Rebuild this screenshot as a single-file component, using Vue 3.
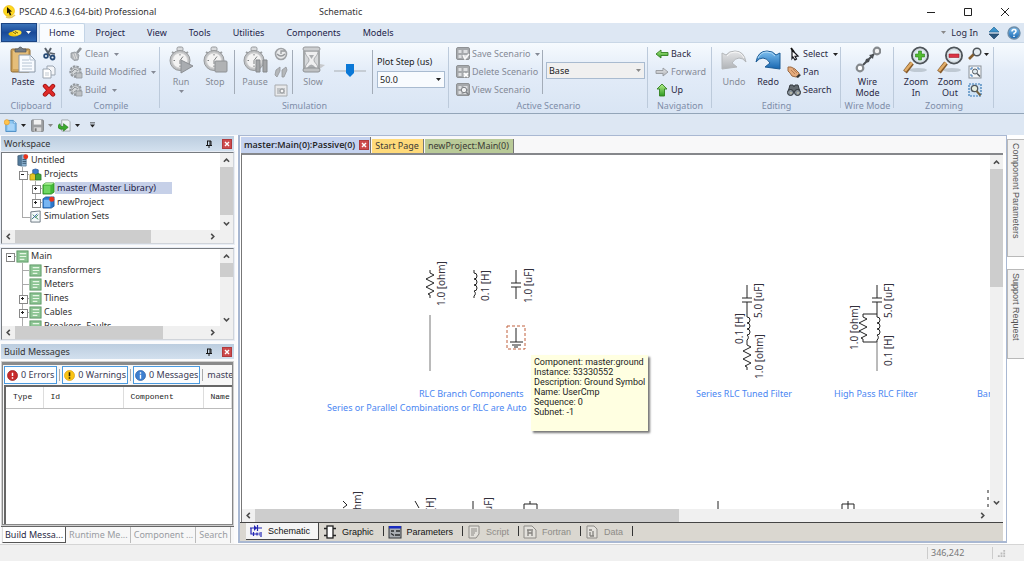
<script setup>
import { ref } from 'vue'

const menuTabs = ['Home', 'Project', 'View', 'Tools', 'Utilities', 'Components', 'Models']
const activeMenu = ref('Home')
const plotStep = ref('50.0')
const scenario = ref('Base')
const speed = ref(50)

const workspace = [
  { cells: [], icon: 'server', text: 'Untitled' },
  { cells: ['minus'], icon: 'projects', text: 'Projects' },
  { cells: ['line', 'plus'], icon: 'library', text: 'master (Master Library)', selected: true },
  { cells: ['line', 'plus last'], icon: 'case', text: 'newProject' },
  { cells: ['ell'], icon: 'sets', text: 'Simulation Sets' }
]
const modules = [
  { cells: ['minus root'], text: 'Main' },
  { cells: ['gap', 'tee'], text: 'Transformers' },
  { cells: ['gap', 'tee'], text: 'Meters' },
  { cells: ['gap', 'plus'], text: 'Tlines' },
  { cells: ['gap', 'plus'], text: 'Cables' },
  { cells: ['gap', 'ell'], text: 'Breakers, Faults' }
]
const filters = [
  { icon: 'error', text: '0 Errors' },
  { icon: 'warning', text: '0 Warnings' },
  { icon: 'info', text: '0 Messages' }
]
const outputTabs = ['Build Messa...', 'Runtime Me...', 'Component ...', 'Search']
const viewTabs = [
  { icon: 'schematic', text: 'Schematic' },
  { icon: 'graphic', text: 'Graphic' },
  { icon: 'params', text: 'Parameters' },
  { icon: 'script', text: 'Script', off: true },
  { icon: 'fortran', text: 'Fortran', off: true },
  { icon: 'datafile', text: 'Data', off: true }
]
const values = [
  [445, 306, '1.0 [ohm]'], [489, 301, '0.1 [H]'], [532, 303, '1.0 [uF]'],
  [762, 318, '5.0 [uF]'], [743, 344, '0.1 [H]'], [763, 379, '1.0 [ohm]'],
  [892, 318, '5.0 [uF]'], [892, 366, '0.1 [H]'], [858, 350, '1.0 [ohm]'],
  [361, 536, '1.0 [ohm]'], [434, 528, '0.1 [H]'], [492, 532, '1.0 [uF]']
]
const captions = [
  [419, 397, 'RLC Branch Components'],
  [327, 411, 'Series or Parallel Combinations or RLC are Auto'],
  [696, 397, 'Series RLC Tuned Filter'],
  [834, 397, 'High Pass RLC Filter'],
  [977, 397, 'Band']
]
const tip = ['Component: master:ground', 'Instance: 53330552', 'Description: Ground Symbol', 'Name: UserCmp', 'Sequence: 0', 'Subnet: -1']
</script>

<template>
  <svg class="defs" aria-hidden="true">
    <defs>
      <linearGradient id="blueG" x1="0" y1="0" x2="0" y2="1"><stop offset="0" stop-color="#7ec0f0" /><stop offset="1" stop-color="#1766b0" /></linearGradient>
      <linearGradient id="grayG" x1="0" y1="0" x2="0" y2="1"><stop offset="0" stop-color="#e6e7e9" /><stop offset="1" stop-color="#b0b3b7" /></linearGradient>
      <linearGradient id="greenG" x1="0" y1="0" x2="0" y2="1"><stop offset="0" stop-color="#b6f08c" /><stop offset="1" stop-color="#2f9a22" /></linearGradient>
      <radialGradient id="lensG"><stop offset="0" stop-color="#ffffff" /><stop offset="1" stop-color="#cfe0ea" /></radialGradient>
      <symbol id="arrow" viewBox="0 0 5 3"><path d="M0 0h5L2.500 3z" fill="currentColor" /></symbol>
      <symbol id="logo" viewBox="0 0 14 14"><circle cx="6" cy="6" r="5.500" fill="#ffd81f" stroke="#e5b400" stroke-width=".6" /><path d="M3 12q5 2 9-2" stroke="#e8c860" stroke-width="1.500" fill="none" /><path d="M4 2l5 4.500-2 .3 1.300 3-1.400.6L5.600 7.400 4 8.600z" fill="#1c1200" /></symbol>
      <symbol id="appmark" viewBox="0 0 14 8"><ellipse cx="6" cy="5" rx="5.500" ry="2.600" fill="#eec50e" /><ellipse cx="9" cy="3.500" rx="4.500" ry="2.600" fill="#ffe13c" /><path d="M5 3l3 2M7 2.500l3 1.500" stroke="#5b4a00" stroke-width=".9" /></symbol>
      <symbol id="paste" viewBox="0 0 26 28"><rect x="1" y="3" width="19" height="23" rx="1.500" fill="#cfa35a" stroke="#8c6a36" /><rect x="3" y="5" width="15" height="18" fill="#e5be7a" /><path d="M5 6V3h3q2-4 5 0h3v3z" fill="#777d83" stroke="#4f555b" stroke-width=".7" /><path d="M9 9h11l5 5v12H9z" fill="#f8fbff" stroke="#8a97a6" /><path d="M20 9v5h5M12 14h7M12 17h10M12 20h10M12 23h10" stroke="#b6c4d3" fill="none" /></symbol>
      <symbol id="cut" viewBox="0 0 14 14"><path d="M3 1l5 8M9 1L5 8" stroke="#59616a" stroke-width="2" fill="none" /><circle cx="10.500" cy="10.500" r="2" fill="none" stroke="#274b76" stroke-width="1.800" /><circle cx="4" cy="9" r="1.900" fill="none" stroke="#274b76" stroke-width="1.700" /><path d="M8 6l5 1" stroke="#59616a" stroke-width="1.500" /></symbol>
      <symbol id="copy" viewBox="0 0 14 14"><path d="M5 1h6l2 2v7H5z" fill="#f3f5f8" stroke="#9ba5b0" /><path d="M1 4h6l2 2v7H1z" fill="#fff" stroke="#9ba5b0" /><path d="M3 8h4M3 10h4" stroke="#c2cad2" /></symbol>
      <symbol id="del" viewBox="0 0 14 14"><path d="M3 3l8 8.500M11 3l-8 8.500" stroke="#9c1414" stroke-width="4.400" stroke-linecap="round" /><path d="M3 3l8 8.500M11 3l-8 8.500" stroke="#e02a28" stroke-width="2.800" stroke-linecap="round" /></symbol>
      <symbol id="clean" viewBox="0 0 14 14"><path d="M12 1L8 6" stroke="#8f9499" stroke-width="2.600" /><path d="M2 6l4-1 4 3-1 5-4 .5-3-3z" fill="#b3b7bb" stroke="#8f9499" stroke-width=".8" /><path d="M4 7l2 5M6 6l2 6" stroke="#ddd" /></symbol>
      <symbol id="gear" viewBox="0 0 14 14"><circle cx="6.500" cy="6.500" r="5" fill="#d3d6d9" stroke="#92979c" stroke-width="2.400" stroke-dasharray="2.400 1" /><circle cx="6.500" cy="6.500" r="4" fill="#d5d8da" stroke="#a5a9ad" /><path d="M3 7l3-3 3 2M5 9l3-2" stroke="#8f9499" fill="none" /><path d="M7 8h6v5H7z" fill="#bdc0c3" stroke="#92979c" stroke-width=".8" /></symbol>
      <symbol id="watch" viewBox="0 0 26 28"><rect x="9" y="1" width="6" height="4" rx="1.500" fill="#d9dbdd" stroke="#96999c" /><path d="M4 6l3 2M20 6l-3 2" stroke="#9b9ea1" stroke-width="2" /><circle cx="12" cy="14.500" r="10" fill="#bfc1c3" stroke="#97999b" /><circle cx="12" cy="14.500" r="7.600" fill="#f3f3f3" stroke="#d4d4d4" /><path d="M12 8v1.500M12 19.500V21M5.500 14.500H7M12 14.500l3-4M12 14.500V18" stroke="#7e8183" fill="none" /></symbol>
      <symbol id="run" viewBox="0 0 26 28"><use href="#watch" width="26" height="28" /><path d="M13 14l12 6-12 7z" fill="#a9acb0" stroke="#8c8f93" /></symbol>
      <symbol id="stop" viewBox="0 0 26 28"><use href="#watch" width="26" height="28" /><rect x="13" y="15" width="12" height="11" rx="1" fill="#b0b2b4" stroke="#8e9194" /></symbol>
      <symbol id="pause" viewBox="0 0 26 28"><use href="#watch" width="26" height="28" /><path d="M14 14h4v12h-4zM21 14h4v12h-4z" fill="#a4a6a8" stroke="#85888b" /></symbol>
      <symbol id="slow" viewBox="0 0 26 28"><path d="M17 25l8-6-5-1z" fill="#c7c9cc" /><path d="M4 4h15v20H4z" fill="#d6d8da" /><path d="M5 5h13c0 5-4 6-4 9s4 4 4 9H5c0-5 4-6 4-9s-4-4-4-9z" fill="#efeff0" stroke="#abadb0" /><path d="M4 5v18M19 5v18" stroke="#a5a8aa" stroke-width="2" /><path d="M7 22q4-7 9 0zM9 9h5l-2.500 4z" fill="#aaadb0" /><rect x="3" y="1" width="17" height="4" rx="2" fill="#cdcfd1" stroke="#97999c" /><rect x="3" y="22" width="17" height="4" rx="2" fill="#bfc1c3" stroke="#909396" /></symbol>
      <symbol id="snap" viewBox="0 0 14 14"><circle cx="7" cy="7" r="5.500" fill="#e9eaeb" stroke="#a0a3a6" stroke-width="1.600" /><path d="M7 7V4h4M3 7q4 4 8 0" stroke="#96999c" fill="none" stroke-width="1.300" /></symbol>
      <symbol id="steps" viewBox="0 0 14 14"><path d="M2 5l4-3v4l-3 6-2-2zM8 5l4-3 1 3-3 7-2 0z" fill="#b4b7ba" stroke="#94979a" stroke-width=".8" /></symbol>
      <symbol id="camera" viewBox="0 0 14 14"><path d="M1 2h12v11H1z" fill="#e8e9eb" stroke="#a8abae" /><path d="M3 5h8v6H3z" fill="#c1c4c7" /><circle cx="8" cy="8" r="2" fill="#f5f5f5" stroke="#909396" /></symbol>
      <symbol id="grid" viewBox="0 0 14 14"><rect x=".500" y=".500" width="13" height="12" rx="1.500" fill="#a6a9ac" stroke="#8f9295" /><path d="M2.500 3h3v3h-3zM7.500 3h4v3h-4zM2.500 8h3v3h-3zM7.500 8h4v3h-4z" fill="#dddfe1" /></symbol>
      <symbol id="scSave" viewBox="0 0 14 14"><use href="#grid" width="14" height="14" /><path d="M7 8l2 4 4-5" stroke="#f7f7f7" stroke-width="1.600" fill="none" /></symbol>
      <symbol id="scDel" viewBox="0 0 14 14"><use href="#grid" width="14" height="14" /><path d="M8 8l4 4M12 8l-4 4" stroke="#fff" stroke-width="1.500" /></symbol>
      <symbol id="scView" viewBox="0 0 14 14"><use href="#grid" width="14" height="14" /><circle cx="8" cy="7" r="2.700" fill="#f1f2f3" stroke="#808387" /><path d="M10 9l3 3" stroke="#808387" stroke-width="1.500" /></symbol>
      <symbol id="back" viewBox="0 0 14 14"><path d="M1 7l5-4v2.500h7v3H6V11z" fill="url(#greenG)" stroke="#338021" stroke-width=".9" /></symbol>
      <symbol id="fwd" viewBox="0 0 14 14"><path d="M13 7L8 3v2.500H1v3h7V11z" fill="url(#grayG)" stroke="#95999d" stroke-width=".9" /></symbol>
      <symbol id="up" viewBox="0 0 14 14"><path d="M7 1l5 5H9.500v7h-5V6H2z" fill="url(#greenG)" stroke="#338021" stroke-width=".9" /></symbol>
      <symbol id="redo" viewBox="0 0 26 28"><path d="M1 16Q3 5 12 5q6 0 9 4l4-2v16l-15-2 5-4q-3-5-7-5-4 0-7 4z" fill="url(#blueG)" stroke="#1c5c96" /><path d="M3 12q3-6 9-6 5 0 8 4" stroke="#b5dbf5" fill="none" /></symbol>
      <symbol id="undo" viewBox="0 0 26 28"><path d="M25 16Q23 5 14 5q-6 0-9 4L1 7v16l15-2-5-4q3-5 7-5 4 0 7 4z" fill="url(#grayG)" stroke="#b4b7ba" /><path d="M23 12q-3-6-9-6-5 0-8 4" stroke="#f8f8f8" fill="none" /></symbol>
      <symbol id="pointer" viewBox="0 0 14 14"><path d="M5 3l6 6-3 .3L9.500 12l-1.500 1-2-3-1 1.500z" fill="#fff" stroke="#15151c" stroke-width="1.200" /><path d="M4 1l3 4" stroke="#111" stroke-width="1.800" /></symbol>
      <symbol id="hand" viewBox="0 0 14 14"><path d="M1 2l3 0 4 2 4 4v2l-3 2-4-1-2-3-2-2z" fill="#e5ab7d" stroke="#9b6a43" /><path d="M4 5l4 4M6 4l4 4" stroke="#a26a42" stroke-width=".7" /><path d="M9 12l3-3 2 1-3 3z" fill="#333" /></symbol>
      <symbol id="bino" viewBox="0 0 14 14"><path d="M3 2h3l1 2 1-2h3l2 7H1z" fill="#646b71" stroke="#343a40" /><circle cx="3.500" cy="9.500" r="3" fill="#8a949c" stroke="#2c3237" /><circle cx="10.500" cy="9.500" r="3" fill="#8a949c" stroke="#2c3237" /><path d="M3 10h2M10 10h2" stroke="#d9d3b2" /></symbol>
      <symbol id="wire" viewBox="0 0 26 28"><circle cx="5" cy="22" r="3.300" fill="#fff" stroke="#85898d" stroke-width="2.200" /><circle cx="22" cy="5" r="3.300" fill="#f2f2f2" stroke="#85898d" stroke-width="2.200" /><path d="M8 19L19 8" stroke="#4a4e52" stroke-width="2" /><path d="M19 8l-5 1 4 4z" fill="#4a4e52" /><circle cx="12.500" cy="14.500" r="2" fill="#4a4e52" /></symbol>
      <symbol id="lens" viewBox="0 0 26 28"><ellipse cx="15" cy="24" rx="9" ry="2" fill="#bfc9d3" /><path d="M2 26L9 17" stroke="#85592a" stroke-width="4.600" /><path d="M2 25L9 16.500" stroke="#e1ad68" stroke-width="2.600" /><circle cx="17" cy="9.500" r="8" fill="url(#lensG)" stroke="#4f555a" stroke-width="2" /><circle cx="17" cy="9.500" r="6.600" fill="none" stroke="#d2d6d9" /></symbol>
      <symbol id="zoomin" viewBox="0 0 26 28"><use href="#lens" width="26" height="28" /><path d="M15.500 5h3v3h3v3h-3v3h-3v-3h-3V8h3z" fill="#53bd30" stroke="#287d1b" stroke-width=".6" /></symbol>
      <symbol id="zoomout" viewBox="0 0 26 28"><use href="#lens" width="26" height="28" /><path d="M12 8h10v3.500H12z" fill="#dc3545" stroke="#99202c" stroke-width=".6" /></symbol>
      <symbol id="mag" viewBox="0 0 14 14"><path d="M1 12l5-5" stroke="#86602f" stroke-width="2.600" /><circle cx="9" cy="5" r="3.800" fill="#e5edf2" stroke="#4e5459" stroke-width="1.500" /></symbol>
      <symbol id="fit" viewBox="0 0 14 14"><rect x="1" y="1" width="12" height="12" fill="#f4f6f8" stroke="#8a9199" /><path d="M3 5V3h2M9 3h2v2M3 9v2h2" stroke="#3a79b7" fill="none" /><circle cx="7" cy="6.500" r="2.500" fill="#dfe9ef" stroke="#535a60" /><path d="M9 8.500l3 3" stroke="#535a60" stroke-width="1.600" /></symbol>
      <symbol id="area" viewBox="0 0 14 14"><rect x="1" y="1" width="12" height="12" fill="#cfe3f6" stroke="#3779b5" stroke-width="1.200" stroke-dasharray="2 1" /><circle cx="6.500" cy="5.500" r="3.200" fill="#e6edde" stroke="#51585e" stroke-width="1.300" /><path d="M8.500 8l4 4.500" stroke="#75613d" stroke-width="2" /></symbol>
      <symbol id="collapse" viewBox="0 0 12 14"><path d="M6 1l5 5H1z" fill="#3c93cb" stroke="#286b99" stroke-width=".7" /><path d="M6 13l5-5H1z" fill="#2c587f" stroke="#1f4568" stroke-width=".7" /></symbol>
      <symbol id="help" viewBox="0 0 14 14"><circle cx="7" cy="7" r="6" fill="url(#blueG)" stroke="#6d8da9" stroke-width="1.400" /><path d="M5 5.500q0-2 2-2t2 1.700Q9 6.500 7 7.500V8.500M7 9.700V11" fill="none" stroke="#fff" stroke-width="1.500" /></symbol>
      <symbol id="newdoc" viewBox="0 0 14 14"><path d="M2 1.500h8l3 3v9H2z" fill="#8cc6f2" stroke="#4b8cc4" /><path d="M4 5h7v7H4z" fill="#a8d4f8" /><path d="M10 1.500v3h3" fill="#eaf5fd" stroke="#4b8cc4" stroke-width=".7" /><circle cx="3" cy="3.500" r="2.800" fill="#ffc44c" stroke="#e59a2c" stroke-width=".7" /></symbol>
      <symbol id="save" viewBox="0 0 14 14"><rect x=".600" y="1" width="12.800" height="12.500" rx="1" fill="#9d9fa1" stroke="#808386" /><path d="M3 1h8v5H3z" fill="#f1f1f1" /><path d="M3 9h8v4.500H3z" fill="#d8d8d8" /><path d="M4 10h2v3H4z" fill="#777" /></symbol>
      <symbol id="import" viewBox="0 0 14 14"><path d="M4 1h7l2 2v10H4z" fill="#f1f4f6" stroke="#a0a6ab" /><path d="M0 7l2-2 1 3h3V5l5 4-5 4v-2H3Q0 11 0 7z" fill="#3cab2c" stroke="#24751b" stroke-width=".7" /></symbol>
      <symbol id="pin" viewBox="0 0 8 8"><path d="M2 1h4M2.500 1v4M5 1v4M6 1v4M1 5.500h6M4 6v2" stroke="#151515" fill="none" /></symbol>
      <symbol id="cross" viewBox="0 0 8 8"><path d="M2 2l4 4M6 2L2 6" stroke="#fff" stroke-width="1.400" /></symbol>
      <symbol id="server" viewBox="0 0 14 14"><path d="M2 2l4-1v12l-4-1z" fill="#537a9b" stroke="#34526b" stroke-width=".7" /><path d="M6 1h5v12H6z" fill="#8fb6d4" stroke="#4f7390" stroke-width=".7" /><path d="M7 6h4M7 8h4M7 10h4" stroke="#34526b" /><circle cx="10.500" cy="3" r="2.600" fill="#e8331c" /></symbol>
      <symbol id="projects" viewBox="0 0 14 14"><path d="M4 2l3-1 3 1v5H4z" fill="#3c7bc9" stroke="#224f8c" stroke-width=".7" /><path d="M1 7l3-1 3 1v6H1z" fill="#e6c626" stroke="#8f7a10" stroke-width=".7" /><path d="M7 7l3-1 3 1v6H7z" fill="#43a43a" stroke="#216b1e" stroke-width=".7" /></symbol>
      <symbol id="library" viewBox="0 0 14 14"><path d="M1 3l3-2h9v10l-3 2H1z" fill="#43b838" stroke="#237f1c" stroke-width=".8" /><path d="M1 3l3-2h9l-3 2z" fill="#a7ed92" /><path d="M2 4h7v8H2z" fill="#6fd662" /></symbol>
      <symbol id="case" viewBox="0 0 14 14"><path d="M1 3l3-2h9v10l-3 2H1z" fill="#2b78cd" stroke="#174d8c" stroke-width=".8" /><path d="M2 4h7v8H2z" fill="#77b5f2" /><circle cx="10.500" cy="3.500" r="2.700" fill="#e7331f" /></symbol>
      <symbol id="sets" viewBox="0 0 14 14"><path d="M2 2l10-1v12H2z" fill="#f4f8fa" stroke="#67727c" /><path d="M4 5l3 3 3-3M3 10l3-3 4 3" stroke="#3c8a5c" fill="none" /><path d="M4 9l5-5" stroke="#3767aa" fill="none" /></symbol>
      <symbol id="module" viewBox="0 0 14 14"><rect x="1" y="1" width="12" height="12" fill="#8cc493" stroke="#609a68" /><path d="M4 4h7M4 7h7M4 10h5" stroke="#e7f6e6" stroke-width="1.300" /></symbol>
      <symbol id="error" viewBox="0 0 12 12"><circle cx="6" cy="6" r="5.500" fill="#c72a2a" stroke="#8f1616" stroke-width=".7" /><path d="M6 3v3.500M6 8v1.500" stroke="#fff" stroke-width="1.600" /></symbol>
      <symbol id="warning" viewBox="0 0 12 12"><circle cx="6" cy="6" r="5.500" fill="#fac515" stroke="#d79a08" stroke-width=".7" /><path d="M6 2.500v4.300M6 8v1.600" stroke="#2b2100" stroke-width="1.700" /></symbol>
      <symbol id="info" viewBox="0 0 12 12"><circle cx="6" cy="6" r="5.500" fill="#3d7fd0" stroke="#23569d" stroke-width=".7" /><path d="M6 2.500V4M6 5.200V9.500" stroke="#fff" stroke-width="1.500" /></symbol>
      <symbol id="schematic" viewBox="0 0 14 14"><path d="M1 4h12M8.500 1v6M2 4v6h3M4.500 8v4M5 10h4M8 8.500v3M12 8v5" stroke="#2326b4" fill="none" stroke-width="1.200" /><path d="M5 1v6l3-3z" fill="#2326b4" /><circle cx="11" cy="10" r="1.800" fill="#7476cf" /></symbol>
      <symbol id="graphic" viewBox="0 0 14 14"><rect x="4" y="1" width="6" height="12" fill="#fff" stroke="#222" stroke-width="1.300" /><path d="M1 3.500h3M1 10.500h3M10 3.500h3M10 10.500h3" stroke="#222" stroke-width="1.600" /></symbol>
      <symbol id="params" viewBox="0 0 14 14"><rect x="1" y="1.500" width="12" height="11.500" fill="#a9adb2" stroke="#33363a" /><path d="M1 1h12v2.500H1z" fill="#1a2cc0" /><path d="M3 6h3M8 6h4M3 8.500l3 2M7 10h5" stroke="#2a2c2e" stroke-width="1.300" /></symbol>
      <symbol id="script" viewBox="0 0 14 14"><path d="M2 1h10v8l-3 4H2z" fill="#e3e1dc" stroke="#8d8b87" /><path d="M4 4h6M4 6h6M4 8h4M4 10h3" stroke="#8d8b87" /></symbol>
      <symbol id="fortran" viewBox="0 0 14 14"><path d="M1 1h8l4 4v8H1z" fill="#e3e1dc" stroke="#8d8b87" /><path d="M4 5h6M5 5v6M5 8h4M9 6v5" stroke="#85837f" stroke-width="1.300" /></symbol>
      <symbol id="datafile" viewBox="0 0 14 14"><path d="M2 1h7l3 3v9H2z" fill="#e3e1dc" stroke="#8d8b87" /><path d="M4 5h3M5 7v4M8 6v5M5 11h4" stroke="#85837f" stroke-width="1.300" /></symbol>
      <symbol id="chev" viewBox="0 0 8 8"><path d="M1 5.500l3-3 3 3" stroke="#4c4c4c" stroke-width="1.800" fill="none" /></symbol>
      <path id="res" d="M0 0v3l4 2-8 4 8 4-8 4 8 4-6 3 2 1v3" />
      <path id="coil" d="M0 0v3a3 3 0 0 1 0 6a3 3 0 0 1 0 6a3 3 0 0 1 0 6a3 3 0 0 1 0 5v2" />
      <path id="cap" d="M0 0v13M-5 13h10M-5 17h10M0 17v12" />
    </defs>
  </svg>

  <div class="app">
    <header class="title">
      <svg class="s14"><use href="#logo" /></svg>
      <h1>PSCAD 4.6.3 (64-bit) Professional</h1>
      <span class="doc-title">Schematic</span>
      <div class="win">
        <button aria-label="Minimize"><svg viewBox="0 0 10 10"><path d="M1 5.500h8" /></svg></button>
        <button aria-label="Maximize"><svg viewBox="0 0 10 10"><path d="M1.500 1.500h7v7h-7z" /></svg></button>
        <button aria-label="Close"><svg viewBox="0 0 10 10"><path d="M1 1l8 8M9 1L1 9" /></svg></button>
      </div>
    </header>

    <nav class="menu">
      <button class="appbtn" aria-label="Application menu"><svg class="mark"><use href="#appmark" /></svg><svg class="arr"><use href="#arrow" /></svg></button>
      <button v-for="t in menuTabs" :key="t" class="mtab" :class="{ on: activeMenu === t }" @click="activeMenu = t">{{ t }}</button>
      <div class="account">
        <svg class="arr dim"><use href="#arrow" /></svg>
        <button>Log In</button>
        <button aria-label="Collapse ribbon"><svg class="s14"><use href="#collapse" /></svg></button>
        <button aria-label="Help"><svg class="s14"><use href="#help" /></svg></button>
      </div>
    </nav>

    <div class="ribbon">
      <section class="group g-clip">
        <div class="body">
          <button class="big"><svg><use href="#paste" /></svg>Paste</button>
          <div class="stack">
            <button class="small" aria-label="Cut"><svg><use href="#cut" /></svg></button>
            <button class="small" aria-label="Copy"><svg><use href="#copy" /></svg></button>
            <button class="small" aria-label="Delete"><svg><use href="#del" /></svg></button>
          </div>
        </div>
        <h2>Clipboard</h2>
      </section>
      <section class="group g-compile">
        <div class="body">
          <div class="stack">
            <button class="small off"><svg><use href="#clean" /></svg>Clean<svg class="arr"><use href="#arrow" /></svg></button>
            <button class="small off"><svg><use href="#gear" /></svg>Build Modified<svg class="arr"><use href="#arrow" /></svg></button>
            <button class="small off"><svg><use href="#gear" /></svg>Build<svg class="arr"><use href="#arrow" /></svg></button>
          </div>
        </div>
        <h2>Compile</h2>
      </section>
      <section class="group g-sim">
        <div class="body">
          <button class="big off"><svg><use href="#run" /></svg>Run<svg class="arr"><use href="#arrow" /></svg></button>
          <button class="big off"><svg><use href="#stop" /></svg>Stop</button>
          <i class="sep"></i>
          <button class="big off"><svg><use href="#pause" /></svg>Pause</button>
          <div class="stack">
            <button class="small" aria-label="Snapshot"><svg><use href="#snap" /></svg></button>
            <button class="small" aria-label="Step"><svg><use href="#steps" /></svg></button>
            <button class="small" aria-label="Capture"><svg><use href="#camera" /></svg></button>
          </div>
          <i class="sep"></i>
          <button class="big off"><svg><use href="#slow" /></svg>Slow</button>
          <input v-model="speed" class="slider" type="range" aria-label="Simulation speed">
          <i class="sep"></i>
          <div class="plot">
            <label for="plot">Plot Step (us)</label>
            <div class="combo"><select id="plot" v-model="plotStep"><option>50.0</option><option>100.0</option></select><svg class="arr"><use href="#arrow" /></svg></div>
          </div>
        </div>
        <h2>Simulation</h2>
      </section>
      <section class="group g-scen">
        <div class="body">
          <div class="stack">
            <button class="small off"><svg><use href="#scSave" /></svg>Save Scenario<svg class="arr"><use href="#arrow" /></svg></button>
            <button class="small off"><svg><use href="#scDel" /></svg>Delete Scenario</button>
            <button class="small off"><svg><use href="#scView" /></svg>View Scenario</button>
          </div>
          <i class="sep"></i>
          <div class="combo wide"><select v-model="scenario" aria-label="Active scenario"><option>Base</option></select><svg class="arr dim"><use href="#arrow" /></svg></div>
        </div>
        <h2>Active Scenario</h2>
      </section>
      <section class="group g-nav">
        <div class="body">
          <div class="stack">
            <button class="small"><svg><use href="#back" /></svg>Back</button>
            <button class="small off"><svg><use href="#fwd" /></svg>Forward</button>
            <button class="small"><svg><use href="#up" /></svg>Up</button>
          </div>
        </div>
        <h2>Navigation</h2>
      </section>
      <section class="group g-edit">
        <div class="body">
          <button class="big off"><svg><use href="#undo" /></svg>Undo</button>
          <button class="big"><svg><use href="#redo" /></svg>Redo</button>
          <div class="stack">
            <button class="small"><svg><use href="#pointer" /></svg>Select<svg class="arr"><use href="#arrow" /></svg></button>
            <button class="small"><svg><use href="#hand" /></svg>Pan</button>
            <button class="small"><svg><use href="#bino" /></svg>Search</button>
          </div>
        </div>
        <h2>Editing</h2>
      </section>
      <section class="group g-wire">
        <div class="body"><button class="big two"><svg><use href="#wire" /></svg><span>Wire<br>Mode</span></button></div>
        <h2>Wire Mode</h2>
      </section>
      <section class="group g-zoom">
        <div class="body">
          <button class="big two"><svg><use href="#zoomin" /></svg><span>Zoom<br>In</span></button>
          <button class="big two"><svg><use href="#zoomout" /></svg><span>Zoom<br>Out</span></button>
          <div class="stack">
            <button class="small" aria-label="Zoom level"><svg><use href="#mag" /></svg><svg class="arr"><use href="#arrow" /></svg></button>
            <button class="small" aria-label="Zoom to fit"><svg><use href="#fit" /></svg></button>
            <button class="small" aria-label="Zoom to area"><svg><use href="#area" /></svg></button>
          </div>
        </div>
        <h2>Zooming</h2>
      </section>
    </div>

    <div class="quick">
      <button aria-label="New"><svg class="s14"><use href="#newdoc" /></svg><svg class="arr"><use href="#arrow" /></svg></button>
      <button aria-label="Save"><svg class="s14"><use href="#save" /></svg><svg class="arr dim"><use href="#arrow" /></svg></button>
      <button aria-label="Import"><svg class="s14"><use href="#import" /></svg><svg class="arr"><use href="#arrow" /></svg></button>
      <button aria-label="Customize"><svg class="more" viewBox="0 0 6 6"><path d="M0 0h6v1H0zM0 2.500h6L3 6z" /></svg></button>
    </div>

    <main class="work">
      <aside class="side">
        <div class="phead"><h2>Workspace</h2><button aria-label="Pin"><svg><use href="#pin" /></svg></button><button class="x" aria-label="Close"><svg><use href="#cross" /></svg></button></div>
        <div class="pane">
          <ul class="tree wtree">
            <li v-for="r in workspace" :key="r.text"><span v-for="(c, i) in r.cells" :key="i" class="cell" :class="c"></span><svg class="s14"><use :href="'#' + r.icon" /></svg><span class="txt" :class="{ sel: r.selected }">{{ r.text }}</span></li>
          </ul>
          <div class="vbar"><svg class="ch"><use href="#chev" /></svg><i class="tall"></i><svg class="ch down"><use href="#chev" /></svg></div>
          <div class="hbar"><svg class="ch left"><use href="#chev" /></svg><i></i><svg class="ch right"><use href="#chev" /></svg></div>
        </div>
        <div class="pane second">
          <ul class="tree">
            <li v-for="r in modules" :key="r.text"><span v-for="(c, i) in r.cells" :key="i" class="cell" :class="c"></span><svg class="s14"><use href="#module" /></svg><span class="txt">{{ r.text }}</span></li>
          </ul>
          <div class="vbar"><svg class="ch"><use href="#chev" /></svg><i></i><svg class="ch down"><use href="#chev" /></svg></div>
          <div class="hbar"><svg class="ch left"><use href="#chev" /></svg><i class="wide"></i><svg class="ch right"><use href="#chev" /></svg></div>
        </div>
        <div class="phead"><h2>Build Messages</h2><button aria-label="Pin"><svg><use href="#pin" /></svg></button><button class="x" aria-label="Close"><svg><use href="#cross" /></svg></button></div>
        <div class="messages">
          <div class="filters">
            <template v-for="f in filters" :key="f.text"><button><svg><use :href="'#' + f.icon" /></svg>{{ f.text }}</button><i></i></template>
            <span>master</span>
          </div>
          <div class="list">
            <table>
              <thead><tr><th class="c1">Type</th><th class="c2">Id</th><th class="c2">Component</th><th>Name</th></tr></thead>
            </table>
          </div>
        </div>
        <div class="otabs"><button v-for="(t, i) in outputTabs" :key="t" :class="{ on: i === 0 }">{{ t }}</button></div>
      </aside>

      <section class="docs">
        <div class="dtabs">
          <div class="dtab on"><button>master:Main(0):Passive(0)</button><button class="x" aria-label="Close tab"><svg><use href="#cross" /></svg></button></div>
          <button class="dtab start">Start Page</button>
          <button class="dtab proj">newProject:Main(0)</button>
        </div>
        <div class="viewport">
          <div class="canvas">
            <svg class="sheet">
              <g transform="translate(-242 -155)">
                <g class="ink">
                  <use href="#res" x="430" y="270" />
                  <use href="#coil" x="474" y="270" />
                  <use href="#cap" x="516" y="270" />
                  <path class="faint" d="M430 315v56" />
                  <path d="M516 328v14M510 342h13M512 345h9M514 347h4" />
                  <path class="pick" d="M507 326h18v23h-18z" />
                  <use href="#cap" x="747" y="285" />
                  <use href="#coil" x="747" y="314" />
                  <use href="#res" x="747" y="342" />
                  <use href="#cap" x="877" y="285" />
                  <use href="#coil" x="877" y="314" />
                  <use href="#res" x="863" y="314" />
                  <path d="M863 314h14M863 342h14" />
                  <path class="faint" d="M877 342v29" />
                  <path d="M343 501l4 4-4 3M415 501l4 7M473 501v8M530 501v3M524 509v-5h13v5M718 501v8M842 509v-5h12v5M848 501v8" />
                  <path stroke-dasharray="3 4" d="M988 490v19" />
                </g>
                <text v-for="(v, i) in values" :key="i" class="val" :transform="`translate(${v[0]} ${v[1]}) rotate(-90)`">{{ v[2] }}</text>
                <text v-for="c in captions" :key="c[2]" class="cap" :x="c[0]" :y="c[1]">{{ c[2] }}</text>
              </g>
            </svg>
            <div class="tip" role="tooltip"><p v-for="t in tip" :key="t">{{ t }}</p></div>
          </div>
          <div class="vbar"><svg class="ch"><use href="#chev" /></svg><i class="page"></i><svg class="ch down"><use href="#chev" /></svg></div>
          <div class="hbar"><svg class="ch left"><use href="#chev" /></svg><i class="page"></i><svg class="ch right"><use href="#chev" /></svg></div>
        </div>
        <div class="vtabs">
          <button v-for="(t, i) in viewTabs" :key="t.text" :class="{ on: i === 0, off: t.off }"><svg class="s14"><use :href="'#' + t.icon" /></svg>{{ t.text }}</button>
        </div>
      </section>

      <div class="rail"><button class="long">Component Parameters</button><button>Support Request</button></div>
    </main>

    <footer class="status"><span>346,242</span><svg viewBox="0 0 10 10"><path d="M7 1h2v2H7zM4 4h2v2H4zM7 4h2v2H7zM1 7h2v2H1zM4 7h2v2H4zM7 7h2v2H7z" /></svg></footer>
  </div>
</template>

<style>
body { margin: 0; background: #fff; }
</style>

<style scoped>
* { box-sizing: border-box; }
.defs { position: absolute; width: 0; height: 0; }
.app { min-height: 100vh; display: flex; flex-direction: column; font: 9px/12px "Noto Sans", "Open Sans", sans-serif; color: #2b2a45; background: #fff; overflow: hidden; }
button { font: inherit; color: inherit; background: none; border: 0; padding: 0; margin: 0; white-space: nowrap; }
h1, h2, p, ul { margin: 0; padding: 0; font: inherit; }
svg { flex: none; display: block; }
.s14 { width: 14px; height: 14px; }
.arr { width: 5px; height: 3px; color: #222; }
.arr.dim { color: #888; }

.title { height: 23px; display: flex; align-items: center; padding: 0 14px 0 3px; color: #333; }
.title h1 { margin-left: 2px; width: 300px; }
.win { margin-left: auto; display: flex; gap: 27px; }
.win svg { width: 10px; height: 10px; fill: none; stroke: #222; }

.menu { height: 19px; display: flex; background: #dde7f3; padding: 0 3px 0 1px; }
.appbtn { width: 36px; display: flex; align-items: center; justify-content: center; gap: 4px; background: linear-gradient(#3a72b8, #1a4a98 50%, #2c66b4); border: 1px solid #1c4584; margin-right: 2px; }
.mark { width: 14px; height: 8px; }
.appbtn .arr { color: #fff; }
.mtab { padding: 0 11px; color: #221d4a; }
.mtab.on { background: #f9fcff; border: 1px solid #c3d4e6; border-bottom: 0; border-radius: 2px 2px 0 0; padding: 0 9px; }
.account { margin-left: auto; display: flex; align-items: center; gap: 5px; }
.account button:last-child { margin-left: 1px; }
.account button:nth-child(3) { margin-left: 4px; }

.ribbon { height: 72px; display: flex; background: linear-gradient(#f6fafe, #e3ecf8 40%, #d9e5f4); border-top: 1px solid #c9d7e6; border-bottom: 1px solid #93a5b8; }
.group { display: flex; flex-direction: column; position: relative; padding-top: 2px; flex: none; }
.group::after { content: ""; position: absolute; right: 0; top: 4px; bottom: 5px; width: 1px; background: #bccadb; }
.group h2 { text-align: center; color: #7e8da8; line-height: 14px; white-space: nowrap; }
.body { height: 54px; display: flex; }
.g-clip { width: 62px; } .g-compile { width: 98px; } .g-sim { width: 289px; } .g-scen { width: 199px; }
.g-nav { width: 64px; } .g-edit { width: 129px; } .g-wire { width: 53px; } .g-zoom { width: 100px; }
.g-clip .body { padding-left: 6px; }
.g-compile .body { padding-left: 7px; }
.g-sim .body { padding-left: 4px; }
.g-scen .body { padding-left: 7px; }
.g-nav .body { padding-left: 7px; }
.g-edit .body { padding-left: 5px; }
.g-wire .body { justify-content: center; }
.g-zoom .body { padding-left: 5px; }
.big { width: 34px; display: flex; flex-direction: column; align-items: center; line-height: 10px; flex: none; padding-top: 1px; }
.big > svg:first-child { width: 26px; height: 28px; margin-bottom: 3px; }
.two > svg:first-child { margin-bottom: 2px; }
.two span { line-height: 11px; }
.big .arr { margin-top: 3px; }
.stack { display: flex; flex-direction: column; flex: none; }
.small { height: 18px; display: flex; align-items: center; gap: 2px; }
.small > svg:first-child { width: 14px; height: 14px; }
.small .arr { margin-left: 3px; }
.off, .off .arr { color: #858a96; }
.g-clip .stack { padding-left: 2px; }
.g-sim .stack { margin: 0 4px 0 2px; }
.sep { width: 1px; height: 44px; background: #a3acb8; margin-top: 5px; flex: none; margin-left: 2px; margin-right: 3px; }
.g-sim .stack + .sep { margin: 5px 3px 0 0; }
.slider { appearance: none; background: none; width: 32px; height: 14px; margin: 19px 4px 0 4px; flex: none; }
.slider::-webkit-slider-runnable-track { height: 2px; background: #c6cdd5; }
.slider::-webkit-slider-thumb { appearance: none; width: 8px; height: 13px; margin-top: -6px; background: #0a78d7; clip-path: polygon(0 0, 100% 0, 100% 70%, 50% 100%, 0 70%); }
.plot { padding-top: 11px; padding-left: 1px; }
.plot label { display: block; color: #222; margin-bottom: 3px; }
.combo { position: relative; width: 68px; }
.combo select { appearance: none; width: 100%; height: 17px; border: 1px solid #a9bbd0; border-radius: 0; background: #f8fbfe; font: inherit; color: #222; padding: 0 2px; display: block; }
.combo .arr { position: absolute; right: 4px; top: 7px; }
.combo.wide { width: 99px; margin-top: 17px; }
.combo.wide select { background: #f0f0f0; }
.g-scen .stack { width: 84px; }
.g-edit .stack { padding-left: 2px; }
.g-zoom .stack { padding-left: 1px; }
.g-zoom .small .arr { margin-left: 0; }

.quick { height: 21px; background: #dde7f3; display: flex; align-items: center; gap: 5px; padding: 1px 4px 0; }
.quick button { display: flex; align-items: center; gap: 4px; }
.quick .s14 { width: 13px; height: 13px; }
.quick .more { width: 5px; height: 6px; margin-left: 5px; fill: #222; }

.work { flex: 1; display: flex; min-height: 0; }
.side { width: 237px; flex: none; display: flex; flex-direction: column; background: #fbfbfc; padding: 1px 3px 0 1px; }
.phead { height: 15px; display: flex; align-items: center; gap: 9px; padding: 0 2px 0 3px; background: linear-gradient(#bccddf, #d2e0ee); color: #333; }
.phead h2 { flex: 1; }
.phead svg { width: 8px; height: 8px; }
.x { background: #cd4a4c; border: 1px solid #b03a3c; width: 10px; height: 10px; flex: none; }
.x svg { width: 8px; height: 8px; }
.pane { margin: 1px 0 4px; height: 92px; display: grid; grid-template: 1fr 13px / 1fr 13px; border: 1px solid #777b80; border-right-color: #d0d4da; border-bottom-color: #d0d4da; background: #fff; flex: none; outline: 1px solid #e8edf5; }
.pane.second { margin: 0 0 4px; }
.pane .hbar { grid-column: 1 / 3; }
.tree { list-style: none; overflow: hidden; min-height: 0; padding-left: 1px; }
.wtree { padding-left: 14px; }
.tree li { height: 14px; display: flex; align-items: center; white-space: nowrap; color: #333; }
.tree .s14 { width: 13px; height: 13px; }
.txt { padding: 0 2px; margin-left: 0; line-height: 12px; }
.txt.sel { background: #c6d0e8; padding-right: 16px; color: #222248; }
.cell { width: 13px; height: 14px; flex: none; position: relative; }
.cell::before, .cell::after { content: ""; position: absolute; }
.line::before { left: 6px; top: 0; bottom: 0; width: 1px; background: #aaa; }
.tee::before, .plus, .minus { background: linear-gradient(#aaa, #aaa) 6px 0 / 1px 14px no-repeat, linear-gradient(#aaa, #aaa) 6px 7px / 7px 1px no-repeat; }
.tee::before { inset: 0; }
.ell::before { left: 6px; top: 0; width: 7px; height: 8px; border: solid #aaa; border-width: 0 0 1px 1px; }
.root { background: linear-gradient(#aaa, #aaa) 6px 7px / 7px 1px no-repeat; }
.last { background: linear-gradient(#aaa, #aaa) 6px 0 / 1px 7px no-repeat, linear-gradient(#aaa, #aaa) 6px 7px / 7px 1px no-repeat; }
.plus::before, .minus::before { left: 3px; top: 4px; width: 7px; height: 7px; border: 1px solid #888; background: linear-gradient(#222, #222) 1px 2px / 3px 1px no-repeat, #fff; }
.plus::after { left: 6px; top: 6px; width: 1px; height: 3px; background: #222; }
.vbar, .hbar { background: #f0f0f0; display: flex; align-items: center; min-width: 0; }
.vbar { flex-direction: column; }
.ch { width: 7px; height: 7px; margin: 3px; }
.vbar .ch { margin: 4px 0 3px; }
.down { transform: rotate(180deg); }
.left { transform: rotate(-90deg); }
.right { transform: rotate(90deg); }
.vbar i { width: 13px; height: 14px; background: #cdcdcd; }
.vbar i.tall { height: 48px; }
.vbar .down, .hbar .right { margin-top: auto; margin-bottom: auto; }
.vbar .down { margin-bottom: 3px; }
.hbar .right { margin-left: auto; margin-right: 17px; }
.hbar i { width: 136px; height: 13px; background: #cdcdcd; }
.hbar i.wide { width: 148px; }

.messages { flex: 1; margin: 3px 1px 1px; border: 1px solid #888; border-top: 3px solid #8a8a8a; outline: 1px solid #cfcfcf; overflow: hidden; display: flex; flex-direction: column; background: #f7f7f7; min-height: 0; }
.filters { height: 20px; display: flex; align-items: center; gap: 2px; padding-left: 1px; border-bottom: 0; flex: none; color: #3b3b55; }
.filters button { height: 18px; border: 1px solid #4a9ae0; background: #fdfeff; display: flex; align-items: center; gap: 3px; padding: 0 2px; flex: none; }
.filters svg { width: 11px; height: 11px; }
.filters i { width: 1px; height: 12px; background: #aaa; flex: none; }
.filters i + button { padding: 0 1px; }
.filters span { padding-left: 2px; }
.list { flex: 1; border: 1px solid #666; border-width: 2px 0 0 2px; background: #fff; margin-left: 1px; }
table { width: 100%; table-layout: fixed; border-collapse: collapse; font: 8px/12px "Liberation Mono", monospace; color: #222; }
th { font-weight: normal; text-align: left; height: 21px; padding: 0 0 0 7px; border-right: 1px solid #ddd; border-bottom: 1px solid #bbb; overflow: hidden; white-space: nowrap; }
.c1 { width: 37px; } .c2 { width: 80px; }
.otabs { height: 18px; display: flex; background: #f7f7f7; color: #999ca2; padding: 0 0 1px 1px; border-top: 1px solid #666; }
.otabs button { padding: 0 2px 0 3px; border-right: 1px solid #bbb; }
.otabs .on { color: #2b2a45; background: #fff; border: 1px solid #555; border-top: 0; border-left-color: #ddd; padding: 0 2px; }

.docs { flex: 1; min-width: 0; display: flex; flex-direction: column; border: 1px solid #a3a9b2; border-width: 1px 1px 2px 2px; margin: 0 0 1px 1px; background: #fff; border-color: #a9b8d2; }
.dtabs { height: 17px; display: flex; align-items: flex-end; padding: 0 0 0 1px; background: #f8f8f9; gap: 1px; }
.dtab { height: 14px; padding: 0 4px 0 3px; border-right: 1px solid #777; color: #3b3a36; }
.dtab.on { display: flex; align-items: center; gap: 4px; background: #c5d3f0; font-family: "Open Sans", sans-serif; font-weight: 600; padding: 0 1px 0 3px; color: #222; height: 16px; }
.start { background: #ffda7a; }
.proj { background: #b9ca98; }
.viewport { flex: 1; display: grid; grid-template: 1fr 13px / 1fr 13px; border-top: 2px solid #85878b; border-left: 1px solid #777; margin: 0 3px 0 1px; min-height: 0; }
.viewport .hbar { grid-column: 1 / 3; }
.viewport .hbar i { width: 424px; }
.viewport .vbar i { height: 118px; }
.canvas { position: relative; overflow: hidden; background: #fff; }
.sheet { width: 100%; height: 100%; position: absolute; inset: 0; }
.ink { fill: none; stroke: #222; }
.faint { stroke: #777; }
.pick { stroke: #c0603c; stroke-dasharray: 3 2; }
.val { font-size: 10px; fill: #33303c; }
.cap { font-size: 9px; fill: #4a86f2; }
.tip { position: absolute; left: 289px; top: 200px; width: 117px; height: 76px; background: #ffffe1; box-shadow: 2px 2px 2px #777; padding: 2px 3px; font: 9px/10px Roboto, "Liberation Sans", sans-serif; color: #222; white-space: nowrap; }
.vtabs { height: 19px; background: #dad7d0; border-top: 1px solid #444; display: flex; padding: 0 0 1px 6px; font: 9px/12px "Liberation Sans", Arial, sans-serif; color: #111; margin-right: 3px; }
.vtabs button { display: flex; align-items: center; gap: 5px; padding: 0 10px 0 4px; position: relative; }
.vtabs .off { color: #8d8b87; }
.vtabs button:not(.on)::after { content: ""; position: absolute; right: 0; top: 3px; width: 1px; height: 10px; background: #333; }
.vtabs .on { background: #f5f5f5; border-right: 1px solid #444; border-bottom: 1px solid #444; padding: 0 8px 0 3px; }
.rail { width: 17px; flex: none; padding-top: 4px; display: flex; flex-direction: column; gap: 12px; }
.rail button { writing-mode: vertical-rl; height: 90px; text-align: left; padding: 3px 2px; border: 1px solid #b9b9b9; background: #f1f1f1; font: 9px/12px "Liberation Sans", Arial, sans-serif; color: #555; border-right: 0; }
.rail .long { height: 118px; }

.status { height: 17px; background: #f0f0f0; border-top: 1px solid #d5d5d5; display: flex; justify-content: flex-end; align-items: center; color: #777; gap: 4px; padding-right: 18px; }
.status span { border: solid #ccc; border-width: 0 1px; width: 66px; padding-left: 3px; }
.status svg { width: 9px; height: 9px; fill: #bbb; }
</style>
